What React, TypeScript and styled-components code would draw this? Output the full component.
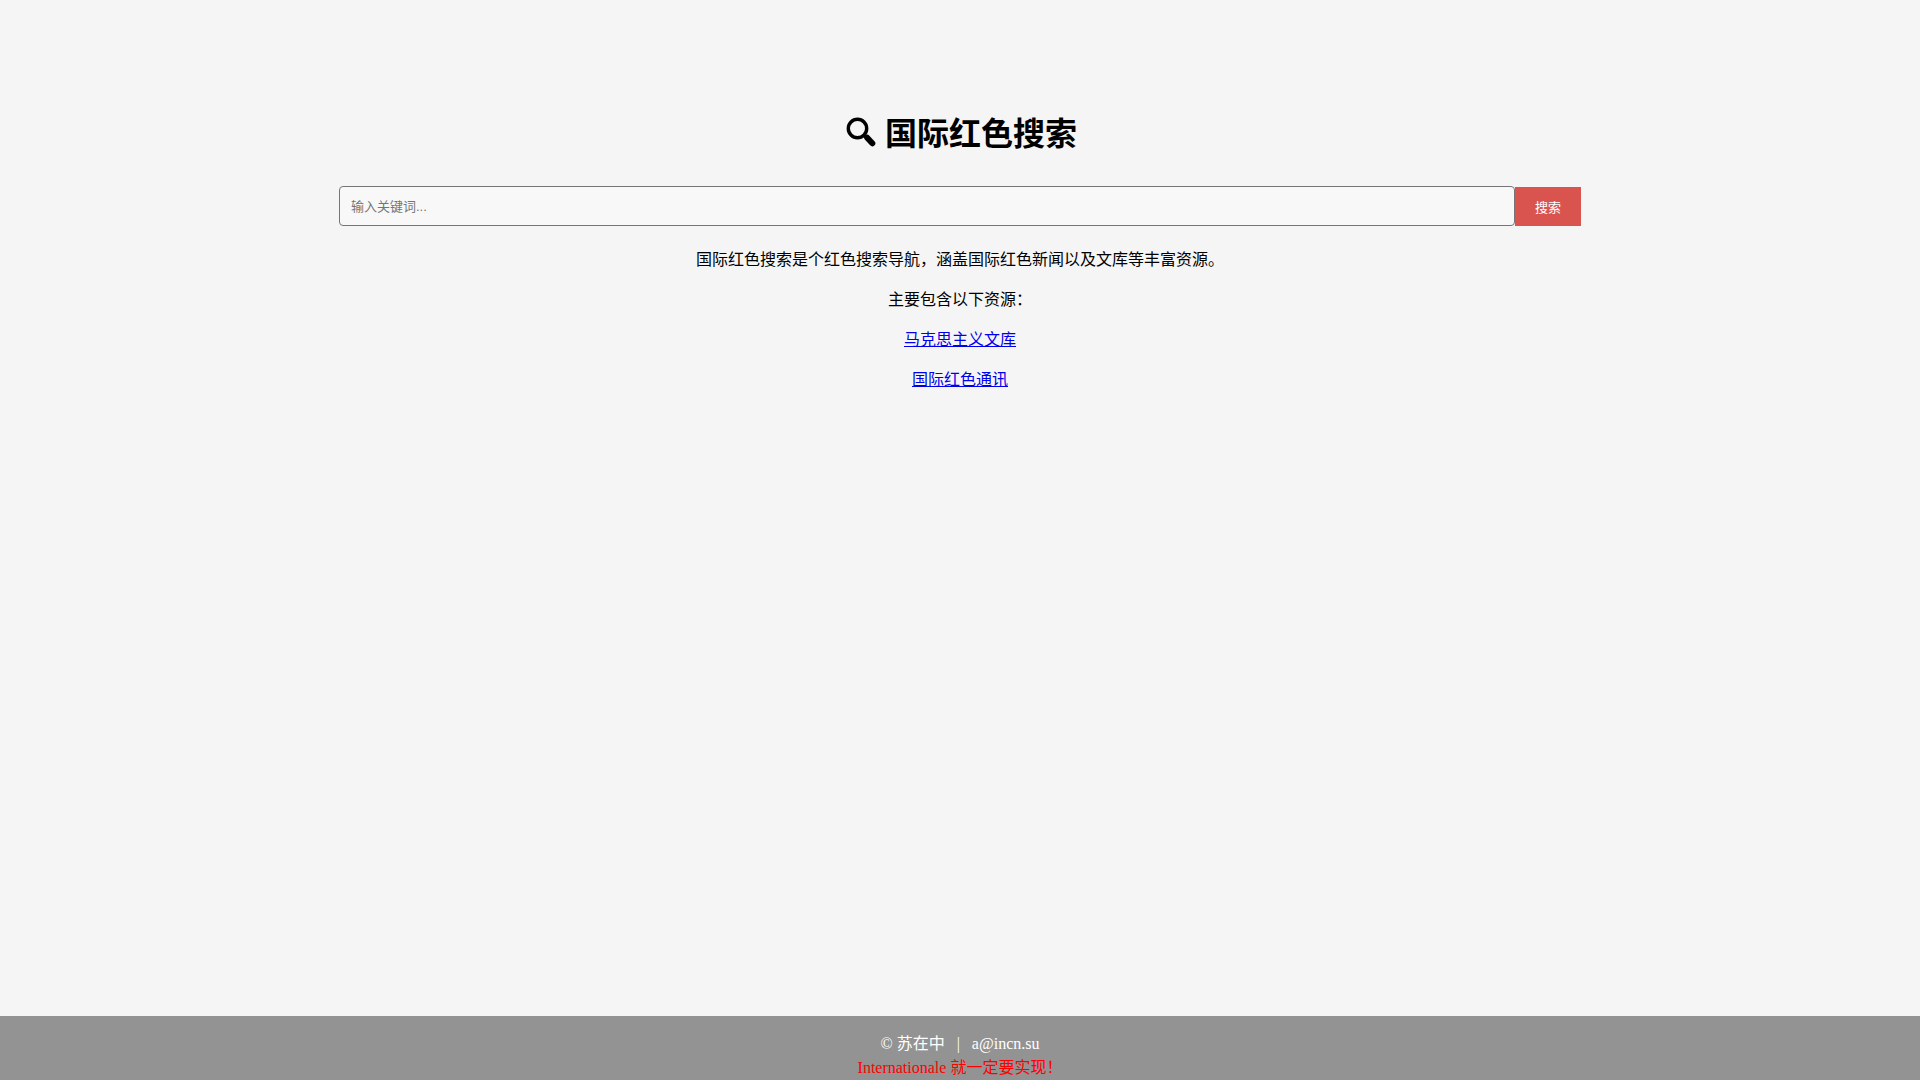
import React from "react";
import styled, { createGlobalStyle } from "styled-components";

const GlobalStyle = createGlobalStyle`
  body {
    margin: 0;
    background: #f5f5f5;
    font-family: "Liberation Serif", "Noto Sans CJK SC", serif;
    font-size: 16px;
  }
`;

const Page = styled.div`
  display: flex;
  flex-direction: column;
  min-height: 100vh;
`;

const Main = styled.main`
  flex: 1;
  box-sizing: border-box;
  width: 100%;
  max-width: 1282px;
  margin: 0 auto;
  padding: 110px 20px 20px;
  text-align: center;
`;

const Title = styled.h1`
  display: flex;
  align-items: center;
  justify-content: center;
  gap: 8px;
  margin: 0;
  font-size: 32px;
  line-height: 48px;
`;

const SearchForm = styled.form`
  display: flex;
  align-items: flex-end;
  margin: 28px 0 22px;
`;

const SearchInput = styled.input`
  flex: 1;
  min-width: 0;
  box-sizing: border-box;
  height: 40px;
  padding: 10px 11px;
  border: 1px solid #767676;
  border-radius: 4px;
  background: #f8f8f8;
  font-family: "Liberation Sans", "Noto Sans CJK SC", sans-serif;
  font-size: 13px;

  &::placeholder {
    color: #757575;
  }
`;

const SearchButton = styled.button`
  height: 39px;
  padding: 0 20px;
  border: 0;
  background: #d9534f;
  color: #fff;
  font-family: "Liberation Sans", "Noto Sans CJK SC", sans-serif;
  font-size: 13px;
`;

const Paragraph = styled.p`
  margin: 0 0 16px;
  line-height: 24px;
`;

const Link = styled.a`
  color: #0000ee;
`;

const Footer = styled.footer`
  padding: 16px 0 0;
  background: #939393;
  color: #fff;
  text-align: center;
  line-height: 24px;
`;

const Slogan = styled.div`
  color: #ff0000;
`;

const SearchIcon = () => (
  <svg width="34" height="34" viewBox="0 0 34 34" aria-hidden="true">
    <circle cx="14.5" cy="11.5" r="9.2" fill="none" stroke="#000" strokeWidth="3.4" />
    <path d="M20.5 17.5 L24 21" stroke="#000" strokeWidth="3" />
    <path d="M24.2 20.8 L29.3 26.2" stroke="#000" strokeWidth="6" strokeLinecap="round" />
  </svg>
);

export default function App() {
  return (
    <Page>
      <GlobalStyle />
      <Main>
        <Title>
          <SearchIcon />
          国际红色搜索
        </Title>
        <SearchForm>
          <SearchInput type="text" aria-label="搜索" placeholder="输入关键词..." />
          <SearchButton type="button">搜索</SearchButton>
        </SearchForm>
        <Paragraph>国际红色搜索是个红色搜索导航，涵盖国际红色新闻以及文库等丰富资源。</Paragraph>
        <Paragraph>主要包含以下资源：</Paragraph>
        <Paragraph><Link href="#library">马克思主义文库</Link></Paragraph>
        <Paragraph><Link href="#news">国际红色通讯</Link></Paragraph>
      </Main>
      <Footer>
        <div>© 苏在中 &nbsp; | &nbsp; a@incn.su</div>
        <Slogan>Internationale 就一定要实现！</Slogan>
      </Footer>
    </Page>
  );
}
